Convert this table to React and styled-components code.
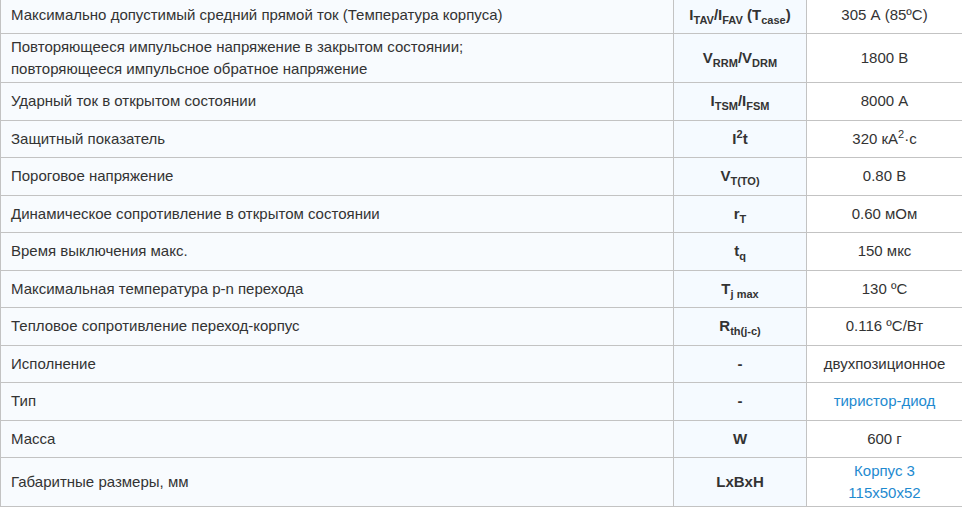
import React from "react";
import styled, { createGlobalStyle } from "styled-components";

const Global = createGlobalStyle`
  html, body { margin: 0; padding: 0; background: #ffffff; }
  body { font-family: "Liberation Sans", Arial, sans-serif; font-size: 15px; color: #333333; overflow: hidden; }
`;

const Table = styled.table`
  width: 962px;
  margin-top: -4.5px;
  border-collapse: collapse;
  table-layout: fixed;
  line-height: 22.5px;
`;

const Row = styled.tr`
  height: 37.5px;
`;

const Cell = styled.td`
  border: 1px solid #c3c3c3;
  padding: 1.5px 10px;
  vertical-align: middle;
  text-align: ${(p) => (p.$kind === "name" ? "left" : "center")};
  font-weight: ${(p) => (p.$kind === "sym" ? 700 : 400)};
  background: ${(p) =>
    p.$kind === "name" ? "#f8fbfe" : p.$kind === "sym" ? "#f5faff" : "#ffffff"};
  color: #333333;

  sub, sup {
    font-size: 11px;
    line-height: 0;
  }
`;

const Link = styled.a`
  color: #1e8ad0;
  text-decoration: none;
`;

const rows = [
  {
    name: "Максимально допустимый средний прямой ток (Температура корпуса)",
    sym: (
      <>
        I<sub>TAV</sub>/I<sub>FAV</sub> (T<sub>case</sub>)
      </>
    ),
    val: "305 А (85ºC)",
  },
  {
    name: (
      <>
        Повторяющееся импульсное напряжение в закрытом состоянии;
        <br />
        повторяющееся импульсное обратное напряжение
      </>
    ),
    sym: (
      <>
        V<sub>RRM</sub>/V<sub>DRM</sub>
      </>
    ),
    val: "1800 В",
  },
  {
    name: "Ударный ток в открытом состоянии",
    sym: (
      <>
        I<sub>TSM</sub>/I<sub>FSM</sub>
      </>
    ),
    val: "8000 А",
  },
  {
    name: "Защитный показатель",
    sym: (
      <>
        I<sup>2</sup>t
      </>
    ),
    val: (
      <>
        320 кА<sup>2</sup>·с
      </>
    ),
  },
  {
    name: "Пороговое напряжение",
    sym: (
      <>
        V<sub>T(TO)</sub>
      </>
    ),
    val: "0.80 В",
  },
  {
    name: "Динамическое сопротивление в открытом состоянии",
    sym: (
      <>
        r<sub>T</sub>
      </>
    ),
    val: "0.60 мОм",
  },
  {
    name: "Время выключения макс.",
    sym: (
      <>
        t<sub>q</sub>
      </>
    ),
    val: "150 мкс",
  },
  {
    name: "Максимальная температура p-n перехода",
    sym: (
      <>
        T<sub>j max</sub>
      </>
    ),
    val: "130 ºC",
  },
  {
    name: "Тепловое сопротивление переход-корпус",
    sym: (
      <>
        R<sub>th(j-c)</sub>
      </>
    ),
    val: "0.116 ºC/Вт",
  },
  { name: "Исполнение", sym: "-", val: "двухпозиционное" },
  { name: "Тип", sym: "-", val: <Link href="#">тиристор-диод</Link> },
  { name: "Масса", sym: "W", val: "600 г" },
  {
    name: "Габаритные размеры, мм",
    sym: "LxBxH",
    val: (
      <>
        <Link href="#">Корпус 3</Link>
        <br />
        <Link href="#">115x50x52</Link>
      </>
    ),
  },
];

export default function App() {
  return (
    <>
      <Global />
      <Table>
        <colgroup>
          <col style={{ width: 673 }} />
          <col style={{ width: 133 }} />
          <col style={{ width: 156 }} />
        </colgroup>
        <tbody>
          {rows.map((r, i) => (
            <Row key={i}>
              <Cell $kind="name">{r.name}</Cell>
              <Cell $kind="sym">{r.sym}</Cell>
              <Cell $kind="val">{r.val}</Cell>
            </Row>
          ))}
        </tbody>
      </Table>
    </>
  );
}
